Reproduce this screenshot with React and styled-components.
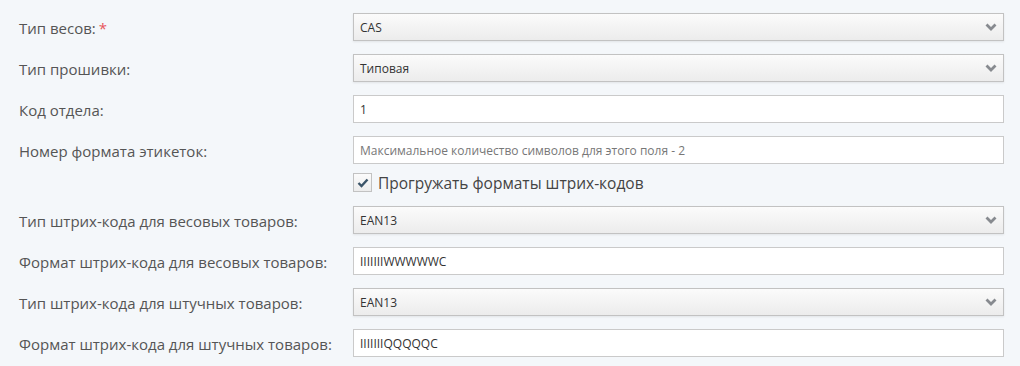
import styled, { createGlobalStyle } from "styled-components";

const Global = createGlobalStyle`
    html, body {
        margin: 0;
        padding: 0;
        background: #f4f7fa;
    }
    body {
        font-family: "Open Sans", "Noto Sans", sans-serif;
    }
`;

const Form = styled.div`
    width: 1020px;
    height: 366px;
    box-sizing: border-box;
    padding: 13px 16px 0 19px;
    display: flex;
    flex-direction: column;
    background: #f4f7fa;
`;

const Row = styled.div`
    display: grid;
    grid-template-columns: 334px 651px;
    align-items: center;
    height: 28px;
    margin-bottom: 13px;
`;

const CheckRow = styled.div`
    display: flex;
    align-items: center;
    gap: 6px;
    margin: -4px 0 14px 334px;
    height: 19px;
`;

const Label = styled.div`
    font-size: 15px;
    color: #555;
    white-space: nowrap;
    padding-top: 1px;

    .req {
        color: #e8555a;
        margin-left: 3px;
    }
`;

const Field = styled.div`
    position: relative;
    height: 28px;
    box-sizing: border-box;
    border: 1px solid ${p => (p.$select ? "#c2c2c2" : "#cacaca")};
    background: ${p => (p.$select ? "linear-gradient(#fbfbfb, #ececec)" : "#fff")};
    box-shadow: ${p => (p.$select ? "0 1px 2px rgba(0,0,0,0.08)" : "none")};
    display: flex;
    align-items: center;
    padding: 0 6px;
    font-size: 12px;
    color: ${p => (p.$placeholder ? "#777" : "#333")};
`;

const Chevron = styled.svg`
    position: absolute;
    right: 6px;
    top: 50%;
    margin-top: -4px;
`;

const Box = styled.div`
    width: 19px;
    height: 19px;
    box-sizing: border-box;
    border: 1px solid #c2c2c2;
    background: linear-gradient(#fbfbfb, #ececec);
    display: flex;
    align-items: center;
    justify-content: center;
`;

const CheckText = styled.span`
    font-size: 15.5px;
    color: #444;
`;

function Select({ value }) {
    return (
        <Field $select>
            {value}
            <Chevron width="12" height="8" viewBox="0 0 12 8">
                <polyline points="1.5,1.5 6,6 10.5,1.5" fill="none" stroke="#878a8f" strokeWidth="2.8" />
            </Chevron>
        </Field>
    );
}

export default function App() {
    return (
        <>
            <Global />
            <Form>
                <Row>
                    <Label>Тип весов:<span className="req">*</span></Label>
                    <Select value="CAS" />
                </Row>
                <Row>
                    <Label>Тип прошивки:</Label>
                    <Select value="Типовая" />
                </Row>
                <Row>
                    <Label>Код отдела:</Label>
                    <Field>1</Field>
                </Row>
                <Row>
                    <Label>Номер формата этикеток:</Label>
                    <Field $placeholder>Максимальное количество символов для этого поля - 2</Field>
                </Row>
                <CheckRow>
                    <Box>
                        <svg width="12" height="10" viewBox="0 0 12 10">
                            <polyline points="1.5,5 4.5,8 10.5,1.5" fill="none" stroke="#3b5468" strokeWidth="2.4" />
                        </svg>
                    </Box>
                    <CheckText>Прогружать форматы штрих-кодов</CheckText>
                </CheckRow>
                <Row>
                    <Label>Тип штрих-кода для весовых товаров:</Label>
                    <Select value="EAN13" />
                </Row>
                <Row>
                    <Label>Формат штрих-кода для весовых товаров:</Label>
                    <Field>IIIIIIIWWWWWC</Field>
                </Row>
                <Row>
                    <Label>Тип штрих-кода для штучных товаров:</Label>
                    <Select value="EAN13" />
                </Row>
                <Row>
                    <Label>Формат штрих-кода для штучных товаров:</Label>
                    <Field>IIIIIIIQQQQQC</Field>
                </Row>
            </Form>
        </>
    );
}
